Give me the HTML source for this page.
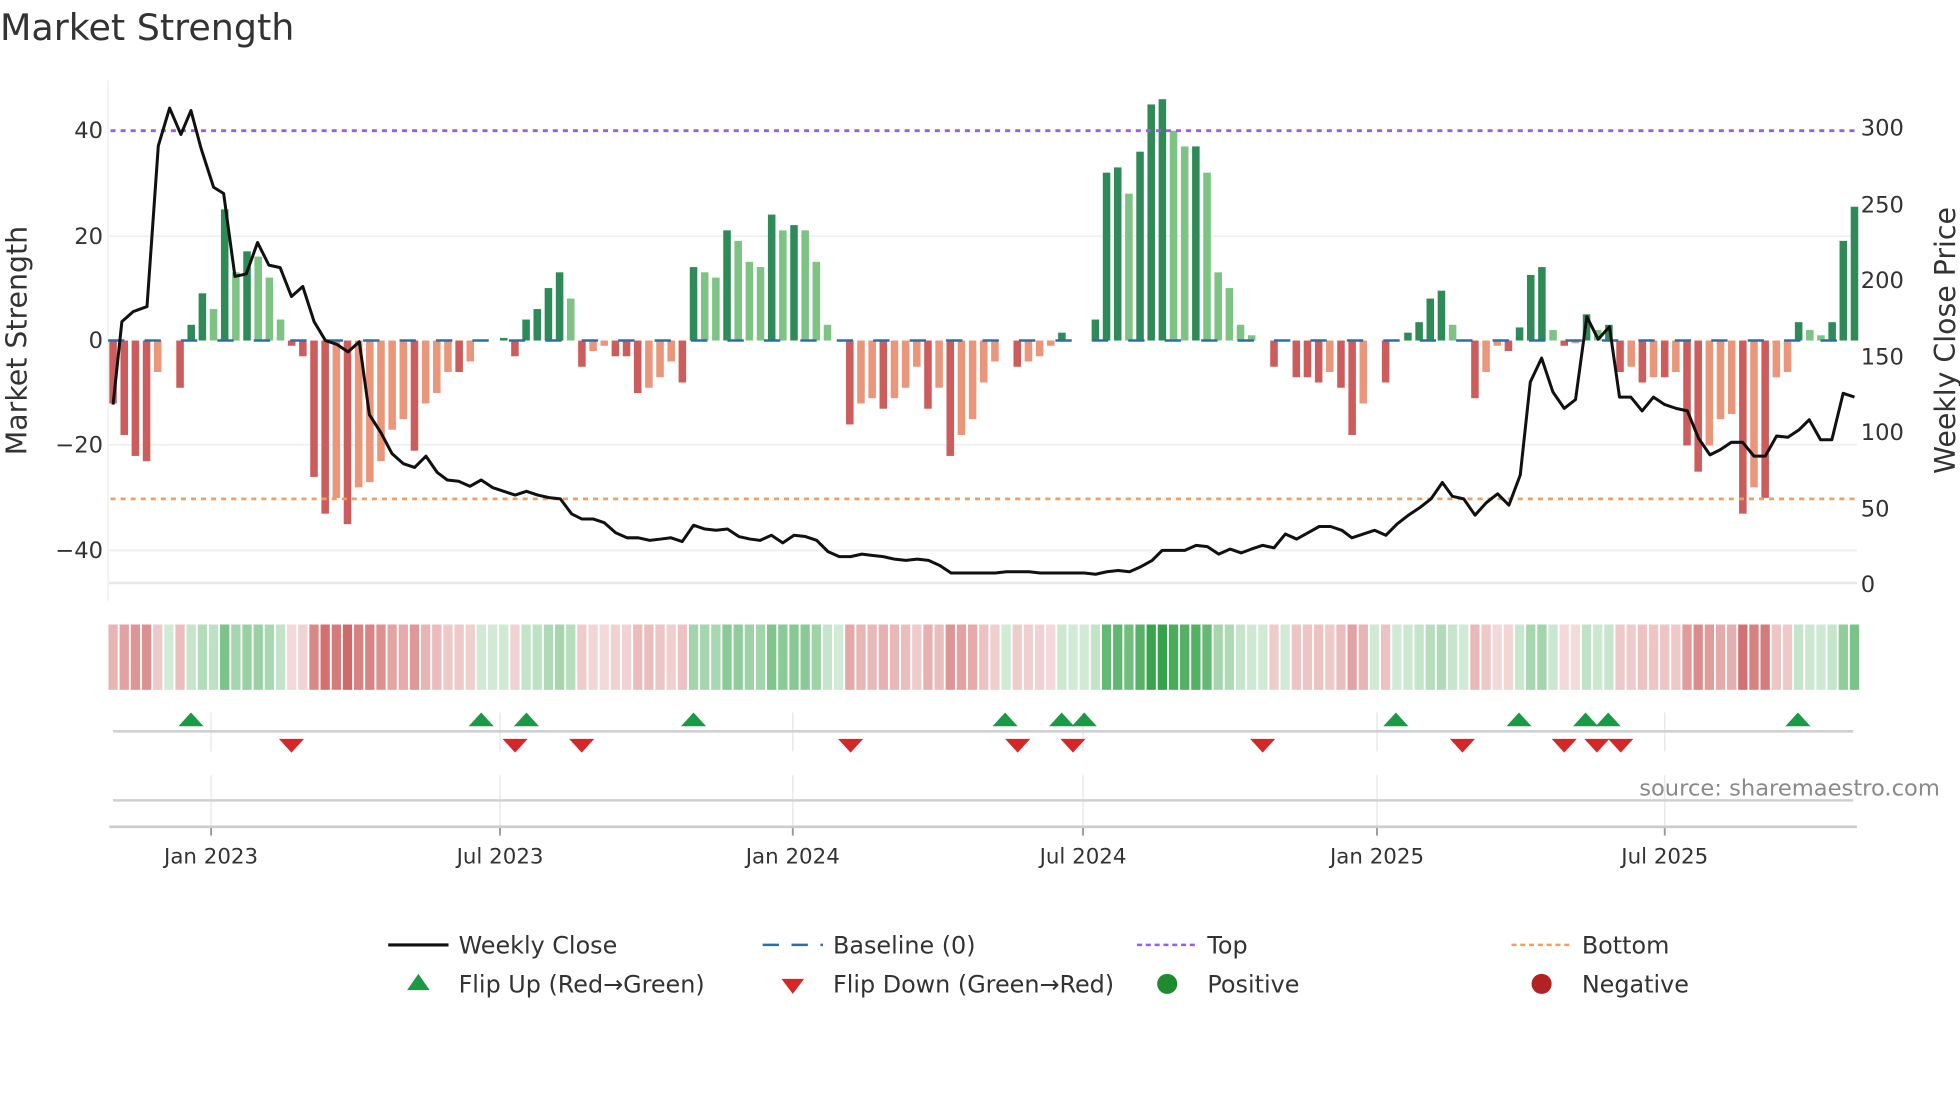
<!DOCTYPE html>
<html><head><meta charset="utf-8"><style>
html,body{margin:0;padding:0;background:#fff;width:1960px;height:1102px;overflow:hidden}
svg{display:block}
text{font-family:"DejaVu Sans","Liberation Sans",sans-serif;fill:#333}
</style></head><body>
<svg id="s" width="1960" height="1102" viewBox="0 0 1560 877" preserveAspectRatio="none" xmlns="http://www.w3.org/2000/svg">
<rect width="1560" height="877" fill="#fff"/>
<text x="0" y="32" font-size="29" fill="#333">Market Strength</text>
<g stroke="#eef0f3" stroke-width="1.5">
<line x1="86" y1="188" x2="1478" y2="188"/>
<line x1="86" y1="354" x2="1478" y2="354"/>
<line x1="86" y1="438" x2="1478" y2="438"/>
<line x1="86" y1="464" x2="1478" y2="464" stroke="#e6e8eb" stroke-width="2"/>
<line x1="86" y1="64" x2="86" y2="478" stroke="#f3f3f3"/>
</g>
<g id="bars"></g>
<line x1="86" y1="271" x2="1478" y2="271" stroke="#2a6fa8" stroke-width="2" stroke-dasharray="13,16"/>
<line x1="88" y1="104" x2="1476" y2="104" stroke="#9b5de5" stroke-width="2.2" stroke-dasharray="4,4"/>
<line x1="88" y1="397" x2="1476" y2="397" stroke="#f0a05a" stroke-width="2.2" stroke-dasharray="4,4"/>
<polyline id="pl" fill="none" stroke="#111" stroke-width="2.4" stroke-linejoin="round"/>
<g font-size="18">
<text x="82" y="110" text-anchor="end">40</text>
<text x="82" y="194" text-anchor="end">20</text>
<text x="82" y="277" text-anchor="end">0</text>
<text x="82" y="360" text-anchor="end">−20</text>
<text x="82" y="444" text-anchor="end">−40</text>
<text x="1481" y="108">300</text>
<text x="1481" y="169">250</text>
<text x="1481" y="229">200</text>
<text x="1481" y="290">150</text>
<text x="1481" y="350">100</text>
<text x="1481" y="411">50</text>
<text x="1481" y="471">0</text>
</g>
<text font-size="22.6" transform="translate(21,271) rotate(-90)" text-anchor="middle">Market Strength</text>
<text font-size="22.6" transform="translate(1556,271) rotate(-90)" text-anchor="middle">Weekly Close Price</text>
<g id="heat"></g>
<g stroke="#e8e8e8" stroke-width="1">
<g id="vg"></g>
</g>
<line x1="90" y1="582" x2="1475" y2="582" stroke="#d0d0d0" stroke-width="2"/>
<line x1="90" y1="637" x2="1475" y2="637" stroke="#d0d0d0" stroke-width="2"/>
<line x1="87" y1="658" x2="1478" y2="658" stroke="#cccccc" stroke-width="2"/>
<g id="mk"></g>
<text x="1544" y="633" font-size="18" text-anchor="end" style="fill:#8a8a8a">source: sharemaestro.com</text>
<g font-size="17" text-anchor="middle" id="xl">
<text x="168" y="687">Jan 2023</text>
<text x="398" y="687">Jul 2023</text>
<text x="631" y="687">Jan 2024</text>
<text x="862" y="687">Jul 2024</text>
<text x="1096" y="687">Jan 2025</text>
<text x="1325" y="687">Jul 2025</text>
</g>
<g font-size="19">
<line x1="309" y1="752" x2="357" y2="752" stroke="#111" stroke-width="2.5"/>
<text x="365" y="759">Weekly Close</text>
<line x1="607" y1="752" x2="655" y2="752" stroke="#2a6fa8" stroke-width="2" stroke-dasharray="13,10"/>
<text x="663" y="759">Baseline (0)</text>
<line x1="905" y1="752" x2="953" y2="752" stroke="#9b5de5" stroke-width="2" stroke-dasharray="4,3"/>
<text x="961" y="759">Top</text>
<line x1="1203" y1="752" x2="1251" y2="752" stroke="#f0a05a" stroke-width="2" stroke-dasharray="4,3"/>
<text x="1259" y="759">Bottom</text>
<polygon points="324,788 342,788 333,775" fill="#1a9a44"/>
<text x="365" y="790">Flip Up (Red→Green)</text>
<polygon points="622,779 640,779 631,791" fill="#d62728"/>
<text x="663" y="790">Flip Down (Green→Red)</text>
<circle cx="929" cy="783" r="8" fill="#1f8a2e"/>
<text x="961" y="790">Positive</text>
<circle cx="1227" cy="783" r="8" fill="#b22222"/>
<text x="1259" y="790">Negative</text>
</g>
</svg>
<script>
var NS="http://www.w3.org/2000/svg";
function el(t,a,p){var e=document.createElementNS(NS,t);for(var k in a)e.setAttribute(k,a[k]);document.getElementById(p).appendChild(e);return e;}
var v=[-12,-18,-22,-23,-6,0,-9,3,9,6,25,13,17,16,12,4,-1,-3,-26,-33,-30,-35,-28,-27,-23,-17,-15,-21,-12,-10,-6,-6,-4,0,0,0.5,-3,4,6,10,13,8,-5,-2,-1,-3,-3,-10,-9,-7,-4,-8,14,13,12,21,19,15,14,24,21,22,21,15,3,0,-16,-12,-11,-13,-11,-9,-5,-13,-9,-22,-18,-15,-8,-4,0,-5,-4,-3,-1,1.5,0,0,4,32,33,28,36,45,46,40,37,37,32,13,10,3,1,0,-5,0,-7,-7,-8,-6,-9,-18,-12,0,-8,0,1.5,3.5,8,9.5,3,0,-11,-6,-1,-2,2.5,12.5,14,2,-1,-0.5,5,2,3,-6,-5,-8,-7,-7,-6,-20,-25,-20,-15,-14,-33,-28,-30,-7,-6,3.5,2,1,3.5,19,25.5];
var n=v.length,x0=90,dx=(1476-90)/(n-1);
for(var i=0;i<n;i++){
 var x=x0+dx*i,val=v[i],prev=i?v[i-1]:0;
 var inc=Math.abs(val)>=Math.abs(prev)||(val*prev<=0);
 var c=val>=0?(inc?"#2e8b57":"#7dc383"):(inc?"#cd5c5c":"#e9967a");
 var h=Math.abs(val)*4.175;
 if(h>0.3)el("rect",{x:x-3,y:val>=0?271-h:271,width:6,height:h,fill:c},"bars");
 var a=Math.min(Math.abs(val)/46,1);
 var hc=val>=0?"rgba(46,160,67,"+(0.22+0.75*a)+")":"rgba(200,80,80,"+(0.2+0.65*Math.min(Math.abs(val)/35,1))+")";
 el("rect",{x:x-3.7,y:497,width:7.4,height:52,fill:hc},"heat");
}
var p=[[90,322],[97,256],[106,248],[117,244],[126,116],[135,86],[144,107],[152,88],[160,118],[170,149],[178,154],[187,220],[196,218],[205,193],[214,211],[223,213],[232,236],[241,228],[250,256],[259,271],[268,274],[277,280],[286,272],[294,330],[303,344],[312,361],[321,369],[330,372],[339,363],[348,376],[356,382],[365,383],[374,387],[383,382],[392,388],[401,391],[410,394],[419,391],[428,394],[437,396],[446,397],[455,409],[463,413],[472,413],[481,416],[490,424],[499,428],[508,428],[517,430],[526,429],[534,428],[543,431],[552,418],[561,421],[570,422],[579,421],[588,427],[597,429],[605,430],[614,426],[623,432],[632,426],[641,427],[650,430],[659,439],[668,443],[677,443],[686,441],[694,442],[703,443],[712,445],[721,446],[730,445],[739,446],[748,450],[757,456],[774,456],[792,456],[801,455],[819,455],[828,456],[845,456],[863,456],[872,457],[881,455],[890,454],[899,455],[908,451],[917,446],[925,438],[934,438],[943,438],[952,434],[961,435],[970,441],[979,437],[988,440],[996,437],[1005,434],[1014,436],[1023,425],[1032,429],[1041,424],[1050,419],[1059,419],[1068,422],[1076,428],[1085,425],[1094,422],[1103,426],[1112,417],[1121,410],[1130,404],[1139,397],[1148,384],[1156,395],[1165,397],[1174,410],[1183,400],[1192,393],[1201,402],[1210,378],[1218,304],[1227,285],[1236,312],[1245,325],[1254,318],[1263,252],[1272,270],[1281,260],[1289,316],[1298,316],[1307,327],[1316,316],[1325,322],[1334,325],[1343,327],[1352,349],[1361,362],[1369,358],[1378,352],[1387,352],[1396,363],[1405,363],[1414,347],[1423,348],[1432,342],[1440,334],[1449,350],[1458,350],[1467,313],[1476,316]];
document.getElementById("pl").setAttribute("points",p.map(function(q){return q.join(",")}).join(" "));
[168,398,631,862,1096,1325].forEach(function(x){
 el("line",{x1:x,y1:567,x2:x,y2:598,stroke:"#e6e6e6"},"vg");
 el("line",{x1:x,y1:617,x2:x,y2:657,stroke:"#e6e6e6"},"vg");
 el("line",{x1:x,y1:658,x2:x,y2:665,stroke:"#999","stroke-width":1.5},"vg");
});
[152,383,419,552,800,845,863,1111,1209,1262,1280,1431].forEach(function(x){
 el("polygon",{points:(x-10)+",578 "+(x+10)+",578 "+x+",567",fill:"#1a9a44"},"mk");});
[232,410,463,677,810,854,1005,1164,1245,1271,1290].forEach(function(x){
 el("polygon",{points:(x-10)+",588 "+(x+10)+",588 "+x+",599",fill:"#d62728"},"mk");});
</script>
</body></html>
